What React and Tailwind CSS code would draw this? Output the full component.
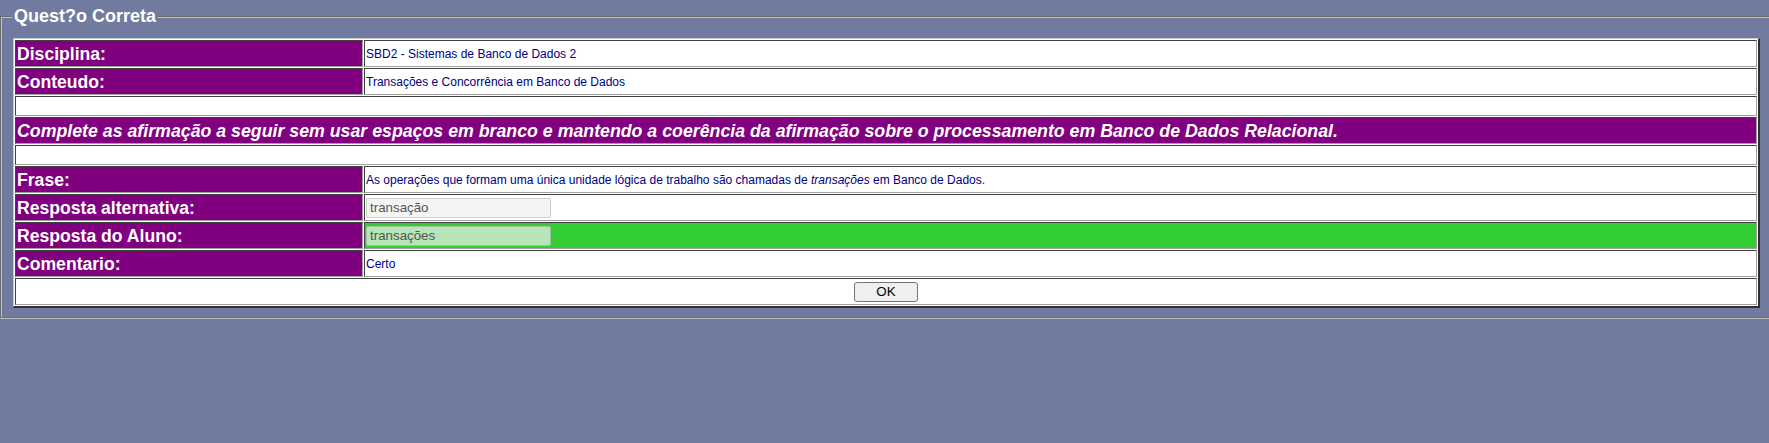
const font = "font-['Liberation_Sans',Arial,sans-serif]";
const cb =
  "border border-solid border-t-[#404040] border-l-[#404040] border-r-[#a0a0a0] border-b-[#a0a0a0]";
const labelCls =
  cb +
  " w-[348px] h-[27px] bg-[#800080] text-white font-bold text-[17.6px] leading-[20px] px-[1px] py-0 align-middle text-left whitespace-nowrap";
const dataCls =
  cb +
  " h-[27px] bg-white text-[#000080] text-[12px] leading-[14px] px-[1px] py-0 align-middle text-left";

function Row({ label, children, green }) {
  return (
    <tr>
      <td className={labelCls}>{label}</td>
      <td className={green ? dataCls + " !bg-[#32cd32]" : dataCls}>{children}</td>
    </tr>
  );
}

function EmptyRow() {
  return (
    <tr>
      <td colSpan={2} className={cb + " h-[20px] bg-white p-0"}></td>
    </tr>
  );
}

function Field({ value }) {
  return (
    <input
      readOnly
      value={value}
      className={
        font +
        " block w-[185px] h-[20px] border border-solid border-[#767676]/30 bg-[#efefef]/70 rounded-[2px] px-[3px] text-[13.33px] text-[#545454] outline-none"
      }
    />
  );
}

export default function App() {
  return (
    <div className={font + " w-full min-h-[443px] bg-[#707b9f] overflow-hidden pt-[6px]"}>
      <fieldset className="m-0 w-[1773px] border-2 [border-style:groove] border-[#c0c0c0] pl-[11px] pr-[11px] pt-[11px] pb-[9px]">
        <legend className="-ml-[1px] px-[2px] h-[21px] leading-[21px] text-[18px] font-bold text-white">
          Quest?o Correta
        </legend>
        <table className="table-fixed w-[1747px] border-separate border-spacing-[1px] bg-white border-solid border-t border-l border-r-2 border-b-2 border-t-[#c8c8c8] border-l-[#c8c8c8] border-r-[#303030] border-b-[#303030]">
          <tbody>
            <Row label="Disciplina:">SBD2 - Sistemas de Banco de Dados 2</Row>
            <Row label="Conteudo:">Transações e Concorrência em Banco de Dados</Row>
            <EmptyRow />
            <tr>
              <td
                colSpan={2}
                className={
                  cb +
                  " h-[27px] bg-[#800080] text-white font-bold italic text-[17.75px] leading-[20px] px-[1px] py-0 align-middle text-left"
                }
              >
                Complete as afirmação a seguir sem usar espaços em branco e mantendo a coerência da afirmação sobre o processamento em Banco de Dados Relacional.
              </td>
            </tr>
            <EmptyRow />
            <Row label="Frase:">
              As operações que formam uma única unidade lógica de trabalho são chamadas de <i>transações</i> em Banco de Dados.
            </Row>
            <Row label="Resposta alternativa:">
              <Field value="transação" />
            </Row>
            <Row label="Resposta do Aluno:" green>
              <Field value="transações" />
            </Row>
            <Row label="Comentario:">Certo</Row>
            <tr>
              <td colSpan={2} className={cb + " h-[27px] bg-white p-0 align-middle text-center"}>
                <button
                  type="button"
                  className={
                    font +
                    " mx-auto block w-[64px] h-[20px] bg-[#efefef] border border-solid border-[#767676] rounded-[3px] text-[13.33px] leading-[16px] text-black"
                  }
                >
                  OK
                </button>
              </td>
            </tr>
          </tbody>
        </table>
      </fieldset>
    </div>
  );
}
